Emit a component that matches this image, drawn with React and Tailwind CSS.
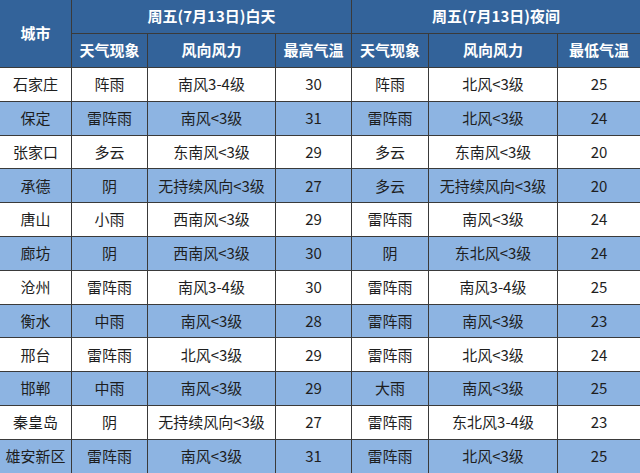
import React from 'react';

const rows = [
  ['石家庄', '阵雨', '南风3-4级', '30', '阵雨', '北风<3级', '25'],
  ['保定', '雷阵雨', '南风<3级', '31', '雷阵雨', '北风<3级', '24'],
  ['张家口', '多云', '东南风<3级', '29', '多云', '东南风<3级', '20'],
  ['承德', '阴', '无持续风向<3级', '27', '多云', '无持续风向<3级', '20'],
  ['唐山', '小雨', '西南风<3级', '29', '雷阵雨', '南风<3级', '24'],
  ['廊坊', '阴', '西南风<3级', '30', '阴', '东北风<3级', '24'],
  ['沧州', '雷阵雨', '南风3-4级', '30', '雷阵雨', '南风3-4级', '25'],
  ['衡水', '中雨', '南风<3级', '28', '雷阵雨', '南风<3级', '23'],
  ['邢台', '雷阵雨', '北风<3级', '29', '雷阵雨', '北风<3级', '24'],
  ['邯郸', '中雨', '南风<3级', '29', '大雨', '南风<3级', '25'],
  ['秦皇岛', '阴', '无持续风向<3级', '27', '雷阵雨', '东北风3-4级', '23'],
  ['雄安新区', '雷阵雨', '南风<3级', '31', '雷阵雨', '北风<3级', '25'],
];

const sub = ['天气现象', '风向风力', '最高气温', '天气现象', '风向风力', '最低气温'];

const th = 'border border-[#3a3a3a] bg-[#33639a] text-white font-bold text-[15px] text-center';
const td = 'border border-[#3a3a3a] text-center text-[15px] text-[#1e1e1e]';

export default function App() {
  return (
    <div className="w-[640px] h-[473px] overflow-hidden bg-white" style={{ fontFamily: '"Noto Sans CJK SC", "Liberation Sans", sans-serif' }}>
      <table className="table-fixed border-collapse w-[641px] -ml-px -mt-px">
        <colgroup>
          <col className="w-[72px]" />
          <col className="w-[76px]" />
          <col className="w-[128px]" />
          <col className="w-[76px]" />
          <col className="w-[77px]" />
          <col className="w-[129px]" />
          <col className="w-[83px]" />
        </colgroup>
        <thead>
          <tr className="h-[34px]">
            <th rowSpan={2} className={th}>城市</th>
            <th colSpan={3} className={th}>周五(7月13日)白天</th>
            <th colSpan={3} className={th}>周五(7月13日)夜间</th>
          </tr>
          <tr className="h-[34px]">
            {sub.map((s, i) => (
              <th key={i} className={th}>{s}</th>
            ))}
          </tr>
        </thead>
        <tbody>
          {rows.map((r, i) => (
            <tr key={i} className={`h-[33.8px] ${i % 2 === 1 ? 'bg-[#8db4e2]' : 'bg-white'}`}>
              {r.map((c, j) => (
                <td key={j} className={td}>{c}</td>
              ))}
            </tr>
          ))}
        </tbody>
      </table>
    </div>
  );
}
